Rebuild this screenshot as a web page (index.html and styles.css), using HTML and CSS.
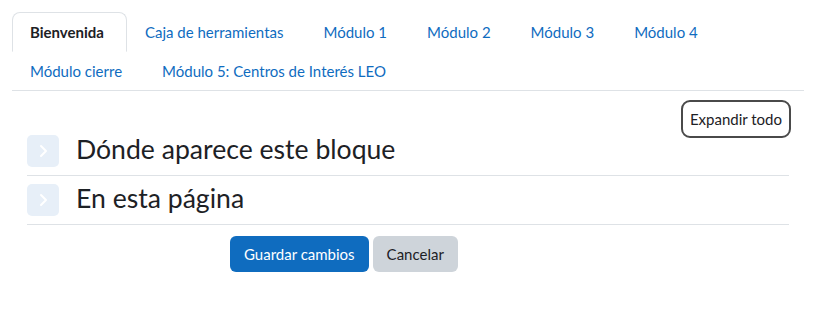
FILE: index.html
```html
<!DOCTYPE html>
<html lang="es">
<head>
<meta charset="utf-8">
<link rel="stylesheet" href="styles.css">
</head>
<body>
<div class="page">
  <ul class="tabs">
    <li class="tab active"><span>Bienvenida</span></li>
    <li class="tab"><a href="#">Caja de herramientas</a></li>
    <li class="tab"><a href="#">Módulo 1</a></li>
    <li class="tab"><a href="#">Módulo 2</a></li>
    <li class="tab"><a href="#">Módulo 3</a></li>
    <li class="tab"><a href="#">Módulo 4</a></li>
    <li class="tab"><a href="#">Módulo cierre</a></li>
    <li class="tab"><a href="#">Módulo 5: Centros de Interés LEO</a></li>
  </ul>
  <div class="form">
    <div class="expand-row"><button class="btn-expand">Expandir todo</button></div>
    <div class="section">
      <span class="chev"><svg width="32" height="32" viewBox="0 0 32 32"><path d="M14 11 L19 16 L14 21" fill="none" stroke="#fff" stroke-width="2" stroke-linecap="round" stroke-linejoin="round"/></svg></span>
      <h3 class="section-title">Dónde aparece este bloque</h3>
    </div>
    <div class="section">
      <span class="chev"><svg width="32" height="32" viewBox="0 0 32 32"><path d="M14 11 L19 16 L14 21" fill="none" stroke="#fff" stroke-width="2" stroke-linecap="round" stroke-linejoin="round"/></svg></span>
      <h3 class="section-title">En esta página</h3>
    </div>
    <div class="actions">
      <button class="btn btn-primary">Guardar cambios</button>
      <button class="btn btn-secondary">Cancelar</button>
    </div>
  </div>
</div>
</body>
</html>
```
FILE: styles.css
```css
* { box-sizing: border-box; }
html, body { margin: 0; padding: 0; background: #fff; }
body {
  font-family: Lato, "Noto Sans", sans-serif;
  font-size: 15px;
  color: #1d2125;
}
.page { padding: 12px 12px 0 12px; }
.tabs {
  list-style: none;
  margin: 0;
  padding: 0;
  display: flex;
  flex-wrap: wrap;
  border-bottom: 1px solid #dee2e6;
}
.tab {
  height: 40px;
  display: flex;
  align-items: center;
  padding: 0 21px 0 17px;
  margin-bottom: -1px;
  border: 1px solid transparent;
  border-radius: 8px 8px 0 0;
}
.tab a { color: #0f6cbf; text-decoration: none; }
.tab.active {
  border-color: #dee2e6 #dee2e6 #fff;
  background: #fff;
  font-weight: 700;
  color: #1d2125;
  padding-right: 22px;
}
.form { padding: 0 15px; }
.expand-row {
  display: flex;
  justify-content: flex-end;
  margin-top: 9px;
  margin-right: -2px;
  height: 27px;
}
.btn-expand {
  font: inherit;
  color: #1d2125;
  background: #fff;
  border: 2px solid #4a4a4a;
  border-radius: 9px;
  height: 38px;
  padding: 0 7px;
  position: relative;
  z-index: 1;
}
.section {
  display: flex;
  align-items: center;
  padding: 8px 0;
  border-bottom: 1px solid #dee2e6;
}
.chev {
  width: 32px;
  height: 32px;
  border-radius: 5px;
  background: #e7eff8;
  display: block;
  flex: none;
}
.chev svg { display: block; }
.section-title {
  margin: 0 0 0 17px;
  font-size: 26.6px;
  font-weight: 400;
  line-height: 32px;
  color: #1d2125;
  position: relative;
  top: -2px;
}
.actions {
  display: flex;
  gap: 4px;
  margin-top: 11px;
  padding-left: 203px;
}
.btn {
  font: inherit;
  height: 36px;
  padding: 0 14px;
  border: none;
  border-radius: 6px;
}
.btn-primary { background: #0f6cbf; color: #fff; }
.btn-secondary { background: #ced4da; color: #1d2125; }
```
